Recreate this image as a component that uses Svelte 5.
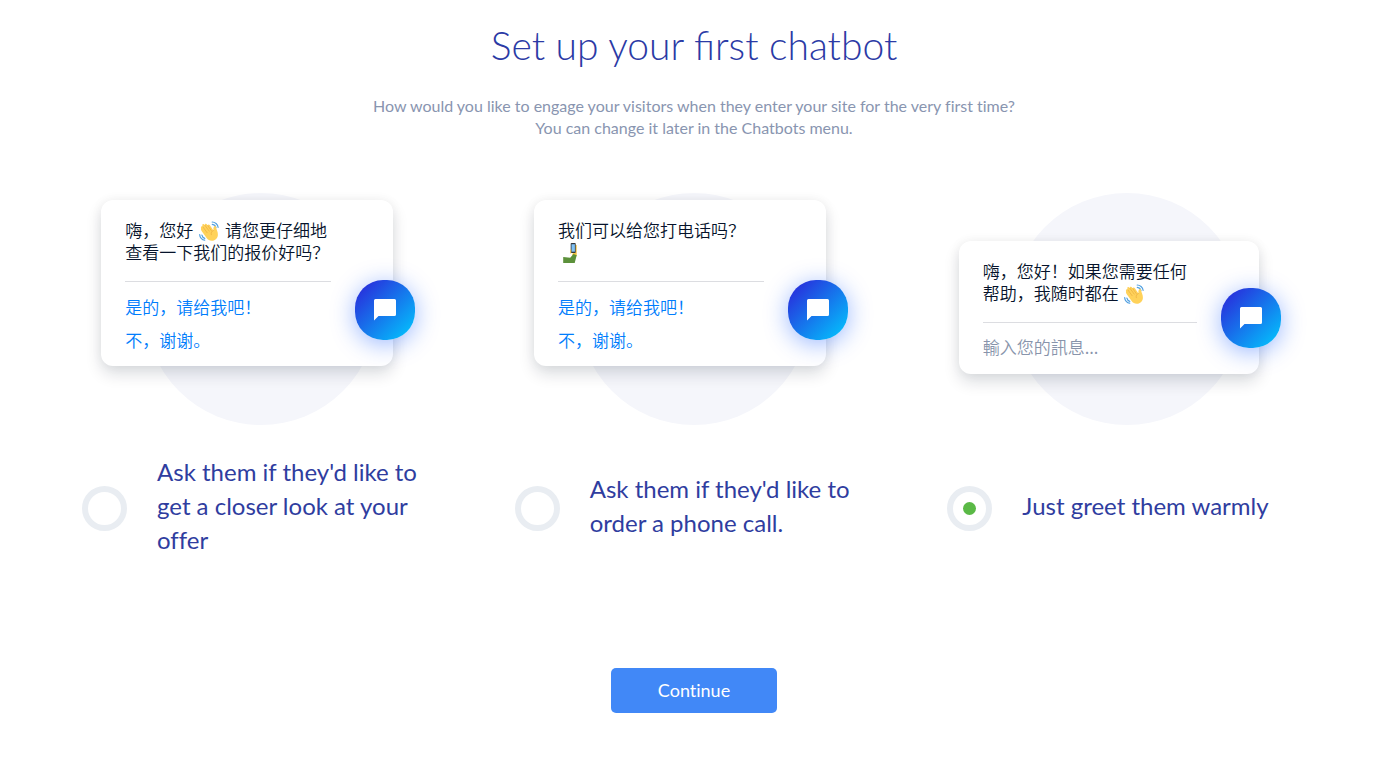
<script lang="ts">
  type Emoji = 'wave' | 'selfie';

  interface Option {
    id: string;
    label: string;
    lines: (string | Emoji)[][];
    replies?: string[];
    placeholder?: string;
  }

  const options: Option[] = [
    {
      id: 'offer',
      label: "Ask them if they'd like to get a closer look at your offer",
      lines: [['嗨，您好 ', 'wave', ' 请您更仔细地'], ['查看一下我们的报价好吗？']],
      replies: ['是的，请给我吧！', '不，谢谢。']
    },
    {
      id: 'call',
      label: "Ask them if they'd like to order a phone call.",
      lines: [['我们可以给您打电话吗？'], ['selfie']],
      replies: ['是的，请给我吧！', '不，谢谢。']
    },
    {
      id: 'greet',
      label: 'Just greet them warmly',
      lines: [['嗨，您好！如果您需要任何'], ['帮助，我随时都在 ', 'wave']],
      placeholder: '輸入您的訊息...'
    }
  ];

  let selected = $state('greet');
</script>

{#snippet wave()}
  <svg class="emoji" viewBox="0 0 20 20" role="img" aria-label="waving hand">
    <g fill="none" stroke="#4f9fe0" stroke-width="1.2" stroke-linecap="round">
      <path d="M13.2 1c2.700 0 5.600 2.400 5.900 5.300" />
      <path d="M13.300 3.400c1.700.2 3.200 1.500 3.600 3.200" />
      <path d="M.7 13.700c.1 2.700 2.300 5.200 5 5.500" />
      <path d="M2.900 14.200c.3 1.500 1.400 2.700 2.900 3.100" />
    </g>
    <path fill="#ffd25a" d="M2.100 7.100c-.8-1.300.8-2.400 1.800-1.300l-.5-1.100c-.6-1.400 1.200-2.300 2-1l.4.500c-.4-1.400 1.400-2 2.200-.8l.7 1c.1-1 1.500-1.200 2.200-.2l3.500 5.300c.2-1.600-.3-3 .7-4.100.8-.8 1.900-.2 2 .9.200 2.400 2 4.600 1.800 7.600-.2 3.200-2.700 5.700-5.900 5.800-2.200.1-4.100-1-5.400-2.800l-5-6.800c-.9-1.200-.6-2.300-.5-3z" />
    <path fill="none" stroke="#e5a63d" stroke-width=".6" stroke-linecap="round" d="M3.900 5.900l4.200 5.800M6 4.400l4.200 5.700M8.800 4.600l3.500 5M14.400 9.500c-1.900.7-2.700 2.100-2.100 4.200" />
  </svg>
{/snippet}

{#snippet selfie()}
  <svg class="emoji" viewBox="0 0 20 20" role="img" aria-label="selfie">
    <path fill="#f7c543" d="M15.300 2h1.400v11l-3 1.500-1.600-2.500 1-2.500h2.200z" />
    <path fill="#5c913b" d="M3.200 14l7 .7 3.300-3.700 3.200 1.200-2 7.800H3.200z" />
    <rect x="10.700" y="0" width="5" height="10" rx=".8" fill="#31373d" />
    <rect x="11.500" y="1.200" width="3.400" height="7.500" fill="#7fc1f5" />
    <path fill="#f7c543" d="M10.200 6.500h1v4h-1z" />
  </svg>
{/snippet}

<main class="setup">
  <header class="setup__header">
    <h1>Set up your first chatbot</h1>
    <p>
      How would you like to engage your visitors when they enter your site for the very first time?<br />
      You can change it later in the Chatbots menu.
    </p>
  </header>

  <div class="options" role="radiogroup" aria-label="Chatbot type">
    {#each options as option (option.id)}
      <section class="option">
        <div class="preview" class:preview--input={option.placeholder}>
          <div class="card">
            <p class="card__message">
              {#each option.lines as line}
                <span class="card__line">
                  {#each line as part}{#if part === 'wave'}{@render wave()}{:else if part === 'selfie'}{@render selfie()}{:else}{part}{/if}{/each}
                </span>
              {/each}
            </p>
            {#if option.replies}
              <div class="card__replies">
                {#each option.replies as reply}
                  <button type="button" class="card__reply">{reply}</button>
                {/each}
              </div>
            {:else}
              <input class="card__input" type="text" placeholder={option.placeholder} aria-label={option.placeholder} />
            {/if}
            <button type="button" class="launcher" aria-label="Open chat">
              <svg viewBox="0 0 24 24" aria-hidden="true">
                <path fill="#fff" d="M2.500 1h19A1.500 1.500 0 0 1 23 2.500v14a1.500 1.500 0 0 1-1.500 1.500H5.500L1 22.500v-20A1.500 1.500 0 0 1 2.500 1z" />
              </svg>
            </button>
          </div>
        </div>
        <label class="choice">
          <input type="radio" name="chatbot" value={option.id} bind:group={selected} />
          <span>{option.label}</span>
        </label>
      </section>
    {/each}
  </div>

  <button type="button" class="continue">Continue</button>
</main>

<style>
  :global(body) {
    background: #fff;
  }

  .setup {
    display: flex;
    flex-direction: column;
    align-items: center;
    padding: 20px 39px 50px 45px;
    font-family: Lato, 'Noto Sans CJK SC', sans-serif;
  }

  .setup__header {
    text-align: center;
  }

  h1 {
    margin: 0 0 25px;
    color: #2b3aa5;
    font-size: 39px;
    font-weight: 300;
    line-height: 50px;
  }

  .setup__header p {
    margin: 0;
    color: #8995b0;
    font-size: 16px;
    line-height: 22px;
    font-variant-ligatures: none;
  }

  .options {
    display: grid;
    grid-template-columns: repeat(3, 1fr);
    align-self: stretch;
    margin-top: 54px;
  }

  .option {
    display: flex;
    flex-direction: column;
    gap: 32px;
  }

  .preview {
    position: relative;
    display: flex;
    align-items: flex-end;
    justify-content: flex-end;
    align-self: center;
    box-sizing: border-box;
    width: 308px;
    height: 232px;
    padding: 0 22px 59px 0;
  }

  .preview--input {
    padding-bottom: 51px;
  }

  .preview::before {
    content: '';
    position: absolute;
    top: 0;
    left: 50%;
    width: 232px;
    height: 232px;
    margin-left: -116px;
    border-radius: 50%;
    background: #f5f6fb;
  }

  .card {
    position: relative;
    flex: none;
    box-sizing: border-box;
    width: 292px;
    padding: 19px 62px 15px 24px;
    border-radius: 12px;
    background: #fff;
    box-shadow: 0 8px 16px rgba(6, 19, 43, 0.14), 0 0 12px rgba(6, 19, 43, 0.05);
    font-family: 'Noto Sans CJK SC', sans-serif;
    font-size: 17px;
    font-weight: 350;
    line-height: 22px;
  }

  .preview--input .card {
    width: 300px;
    padding-bottom: 16px;
  }

  .card__message {
    margin: 0;
    padding-bottom: 18px;
    border-bottom: 1px solid #dcdde1;
    color: #06132b;
  }

  .card__line {
    display: block;
    height: 22px;
    white-space: nowrap;
  }

  .emoji {
    width: 20px;
    height: 20px;
    margin: 0 2px;
    vertical-align: -4px;
  }

  .card__replies {
    display: flex;
    flex-direction: column;
    align-items: flex-start;
    gap: 11px;
    padding-top: 14px;
  }

  .card__reply {
    height: 22px;
    padding: 0;
    border: 0;
    background: none;
    color: #007dfc;
    font: inherit;
    cursor: pointer;
  }

  .card__input {
    display: block;
    width: 100%;
    height: 22px;
    margin-top: 13px;
    padding: 0;
    border: 0;
    outline: 0;
    background: none;
    font: inherit;
  }

  .card__input::placeholder {
    color: #8894ab;
    opacity: 1;
  }

  .launcher {
    position: absolute;
    right: -22px;
    bottom: 26px;
    display: flex;
    align-items: center;
    justify-content: center;
    width: 60px;
    height: 60px;
    padding: 0;
    border: 0;
    border-radius: 28px;
    background: linear-gradient(135deg, #2a27da 5%, #00ccff 100%);
    box-shadow: 0 4px 24px rgba(0, 77, 255, 0.4);
    cursor: pointer;
  }

  .launcher svg {
    width: 24px;
    height: 24px;
  }

  .choice {
    display: flex;
    flex: 1;
    align-items: center;
    gap: 30px;
    padding: 0 37px;
    color: #2f3d9f;
    font-size: 24px;
    line-height: 34px;
    cursor: pointer;
    font-variant-ligatures: none;
  }

  .choice span {
    margin: -2px 0 2px;
  }

  .choice input {
    display: grid;
    flex: none;
    place-items: center;
    appearance: none;
    box-sizing: border-box;
    width: 45px;
    height: 45px;
    margin: 0;
    border: 6px solid #e9edf2;
    border-radius: 50%;
    background: #fff;
  }

  .choice input:checked::before {
    content: '';
    width: 13px;
    height: 13px;
    border-radius: 50%;
    background: #5ab946;
  }

  .continue {
    min-width: 166px;
    height: 45px;
    margin-top: 109px;
    padding: 0 24px 2px;
    border: 0;
    border-radius: 5px;
    background: #4188f7;
    color: #fff;
    font-family: inherit;
    font-size: 18px;
    font-variant-ligatures: none;
    cursor: pointer;
  }
</style>
